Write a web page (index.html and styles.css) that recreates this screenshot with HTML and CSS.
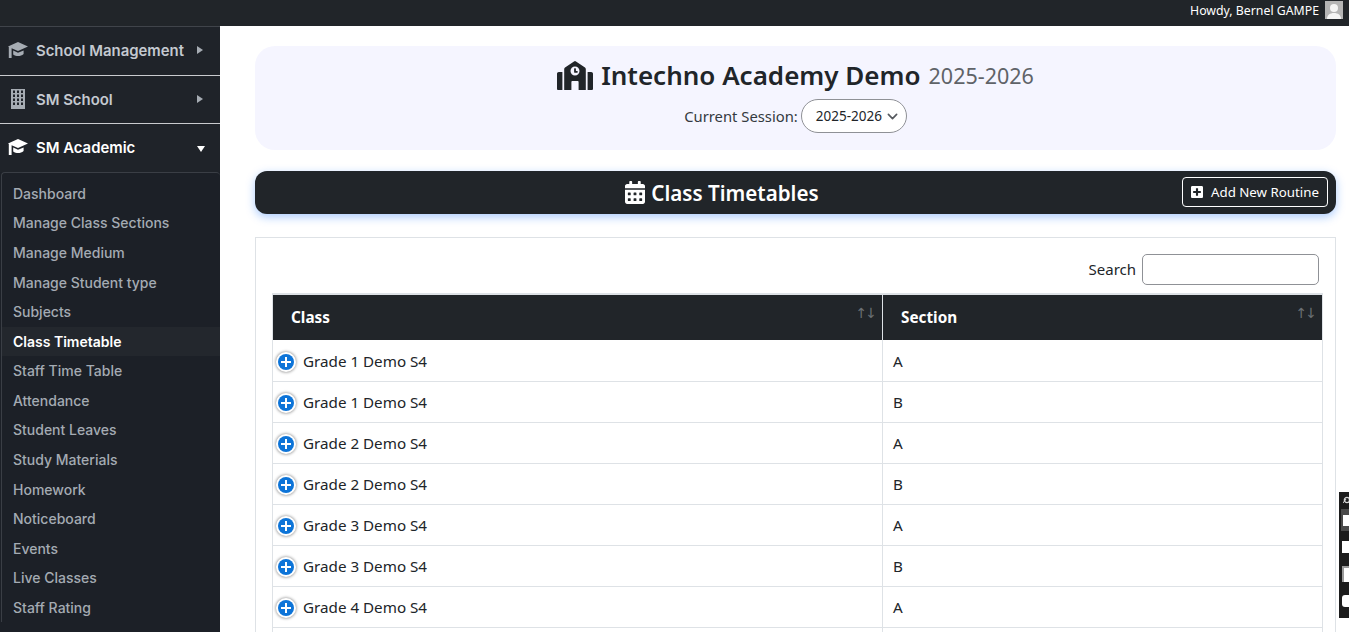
FILE: index.html
```html
<!DOCTYPE html>
<html>
<head>
<meta charset="utf-8">
<title>Class Timetables</title>
<link rel="stylesheet" href="styles.css">
</head>
<body>

<svg class="icon-defs" width="0" height="0">
  <defs>
    <symbol id="i-cap" viewBox="0 0 20 16"><path fill="currentColor" d="M10 0L20 4.5 10 9 3.6 6.2V16H.8V5L0 4.5zM5.2 8.6L10 10.8l5.6-2.4V12c-3 2.6-7.4 2.6-10.4.4z"/></symbol>
    <symbol id="i-building" viewBox="0 0 14 20"><path fill="currentColor" fill-rule="evenodd" d="M0 0h14v20H0zM2 1.5v2.5h2V1.5zm4 0v2.5h2V1.5zm4 0v2.5h2V1.5zM2 5.5V8h2V5.5zm4 0V8h2V5.5zm4 0V8h2V5.5zM2 9.5V12h2V9.5zm4 0V12h2V9.5zm4 0V12h2V9.5zM2 13.500V16h2v-2.500zm4 0V16h2v-2.500zm4 0V16h2v-2.500z"/></symbol>
  </defs>
</svg>

<header class="topbar">
  <span class="howdy">Howdy, Bernel GAMPE</span>
  <span class="avatar">
    <svg viewBox="0 0 18 18" width="18" height="18"><rect width="18" height="18" fill="#b5b5b5"/><circle cx="9" cy="7" r="4" fill="#f4f4f4"/><path d="M2 18c0-4 3-6 7-6s7 2 7 6z" fill="#f4f4f4"/></svg>
  </span>
</header>

<div class="shell">
  <aside class="sidebar">
    <a class="menu-head">
      <svg class="menu-icon"><use href="#i-cap"/></svg>
      <span class="menu-label">School Management</span>
      <span class="caret-right"></span>
    </a>
    <a class="menu-head short">
      <svg class="menu-icon"><use href="#i-building"/></svg>
      <span class="menu-label">SM School</span>
      <span class="caret-right"></span>
    </a>
    <a class="menu-head open">
      <svg class="menu-icon"><use href="#i-cap"/></svg>
      <span class="menu-label">SM Academic</span>
      <span class="caret-down"></span>
    </a>
    <ul class="submenu">
      <li>Dashboard</li>
      <li>Manage Class Sections</li>
      <li>Manage Medium</li>
      <li>Manage Student type</li>
      <li>Subjects</li>
      <li class="active">Class Timetable</li>
      <li>Staff Time Table</li>
      <li>Attendance</li>
      <li>Student Leaves</li>
      <li>Study Materials</li>
      <li>Homework</li>
      <li>Noticeboard</li>
      <li>Events</li>
      <li>Live Classes</li>
      <li>Staff Rating</li>
    </ul>
  </aside>

  <main class="content">
    <section class="hero">
      <h1 class="hero-title">
        <svg class="school-icon" viewBox="0 0 640 512"><path fill="currentColor" d="M0 224v272c0 8.84 7.16 16 16 16h80V192H32c-17.67 0-32 14.33-32 32zm360-48h-24v-40c0-4.42-3.58-8-8-8h-16c-4.42 0-8 3.58-8 8v64c0 4.42 3.58 8 8 8h48c4.42 0 8-3.58 8-8v-16c0-4.42-3.58-8-8-8zm137.75-63.96l-160-106.67a32.02 32.02 0 0 0-35.5 0l-160 106.67A32.002 32.002 0 0 0 128 138.66V512h128V368c0-8.84 7.16-16 16-16h96c8.84 0 16 7.16 16 16v144h128V138.67c0-10.7-5.35-20.7-14.25-26.63zM320 256c-44.18 0-80-35.82-80-80s35.82-80 80-80 80 35.82 80 80-35.82 80-80 80zm288-64h-64v320h80c8.84 0 16-7.16 16-16V224c0-17.67-14.33-32-32-32z"/></svg>
        <span>Intechno Academy Demo</span> <small>2025-2026</small>
      </h1>
      <div class="session">
        <label>Current Session:</label>
        <span class="session-select">2025-2026
          <svg viewBox="0 0 16 16" width="11" height="11"><path d="M2 5l6 6 6-6" fill="none" stroke="#55595e" stroke-width="2.4" stroke-linecap="round" stroke-linejoin="round"/></svg>
        </span>
      </div>
    </section>

    <section class="title-bar">
      <h2 class="title-text">
        <svg class="cal-icon" viewBox="0 0 448 512"><path fill="currentColor" d="M0 464c0 26.5 21.5 48 48 48h352c26.5 0 48-21.5 48-48V192H0v272zm320-196c0-6.6 5.4-12 12-12h40c6.6 0 12 5.4 12 12v40c0 6.6-5.4 12-12 12h-40c-6.6 0-12-5.4-12-12v-40zm0 128c0-6.6 5.4-12 12-12h40c6.6 0 12 5.4 12 12v40c0 6.6-5.4 12-12 12h-40c-6.6 0-12-5.4-12-12v-40zM192 268c0-6.6 5.4-12 12-12h40c6.6 0 12 5.4 12 12v40c0 6.6-5.4 12-12 12h-40c-6.6 0-12-5.4-12-12v-40zm0 128c0-6.6 5.4-12 12-12h40c6.6 0 12 5.4 12 12v40c0 6.6-5.4 12-12 12h-40c-6.6 0-12-5.4-12-12v-40zM64 268c0-6.6 5.4-12 12-12h40c6.6 0 12 5.4 12 12v40c0 6.6-5.4 12-12 12H76c-6.6 0-12-5.4-12-12v-40zm0 128c0-6.6 5.4-12 12-12h40c6.6 0 12 5.4 12 12v40c0 6.6-5.4 12-12 12H76c-6.6 0-12-5.4-12-12v-40zM400 64h-48V16c0-8.8-7.2-16-16-16h-32c-8.8 0-16 7.2-16 16v48H160V16c0-8.8-7.2-16-16-16h-32c-8.8 0-16 7.2-16 16v48H48C21.5 64 0 85.5 0 112v48h448v-48c0-26.5-21.5-48-48-48z"/></svg>
        Class Timetables
      </h2>
      <a class="add-btn">
        <svg class="plus-icon" viewBox="0 0 448 512"><path fill="currentColor" d="M400 32H48C21.5 32 0 53.5 0 80v352c0 26.5 21.5 48 48 48h352c26.5 0 48-21.5 48-48V80c0-26.5-21.5-48-48-48zm-32 252c0 6.6-5.4 12-12 12h-92v92c0 6.6-5.4 12-12 12h-56c-6.6 0-12-5.4-12-12v-92H92c-6.6 0-12-5.4-12-12v-56c0-6.6 5.4-12 12-12h92v-92c0-6.6 5.4-12 12-12h56c6.6 0 12 5.4 12 12v92h92c6.6 0 12 5.4 12 12v56z"/></svg>
        Add New Routine
      </a>
    </section>

    <section class="table-card">
      <div class="search-row">
        <label class="search-label">Search</label>
        <input class="search-input" type="text">
      </div>
      <table class="routine-table">
        <thead>
          <tr>
            <th class="col-class">Class<span class="sort">↑↓</span></th>
            <th class="col-section">Section<span class="sort">↑↓</span></th>
          </tr>
        </thead>
        <tbody>
          <tr><td><span class="expand"></span>Grade 1 Demo S4</td><td>A</td></tr>
          <tr><td><span class="expand"></span>Grade 1 Demo S4</td><td>B</td></tr>
          <tr><td><span class="expand"></span>Grade 2 Demo S4</td><td>A</td></tr>
          <tr><td><span class="expand"></span>Grade 2 Demo S4</td><td>B</td></tr>
          <tr><td><span class="expand"></span>Grade 3 Demo S4</td><td>A</td></tr>
          <tr><td><span class="expand"></span>Grade 3 Demo S4</td><td>B</td></tr>
          <tr><td><span class="expand"></span>Grade 4 Demo S4</td><td>A</td></tr>
          <tr><td></td><td></td></tr>
        </tbody>
      </table>
    </section>
  </main>
</div>

<!-- floating extension toolbar at the window edge -->
<div class="float-tools">
  <svg class="tool-gear" viewBox="0 0 6 8" width="6" height="8"><circle cx="4" cy="4" r="2.6" fill="none" stroke="#d8d8d8" stroke-width="1.4"/><path d="M0 7L3 3" stroke="#d8d8d8" stroke-width="1"/></svg>
  <span class="tool-active"><span class="tool-card"></span></span>
  <span class="tool-block"></span>
  <span class="tool-doc"></span>
  <span class="tool-puzzle"></span>
</div>

</body>
</html>
```

FILE: styles.css
```css
:root {
  --dark: #212529;
  --side: #1c2027;
  --line: #dee2e6;
}

* {
  box-sizing: border-box;
}

html, body {
  height: 100%;
}

body {
  margin: 0;
  background: #fff;
  color: #212529;
  font-family: "Noto Sans", "Open Sans", sans-serif;
  overflow: hidden;
}

.icon-defs {
  display: block;
  height: 0;
}

.topbar {
  height: 26px;
  background: var(--dark);
  color: #fff;
  display: flex;
  justify-content: flex-end;
  align-items: center;
  gap: 6px;
  padding: 0 6px 6px 0;
  font-size: 12.3px;
}

.avatar {
  display: flex;
  width: 18px;
  height: 18px;
}

.shell {
  display: flex;
  height: 606px;
}

/* sidebar */
.sidebar {
  width: 220px;
  flex: none;
  background: var(--side);
  font-family: Inter, sans-serif;
  overflow: hidden;
  border-top: 1px solid #40444a;
}

.menu-head {
  display: flex;
  align-items: center;
  height: 49px;
  padding: 0 14px 0 8px;
  color: #c4c9d0;
  font-size: 14.9px;
  font-weight: 600;
  background: #1f2329;
  border-bottom: 1px solid #c9cbce;
}

.menu-head.short {
  height: 48px;
}

.menu-head.open {
  color: #fff;
  border-bottom: 0;
  height: 48px;
}

.menu-icon {
  width: 20px;
  height: 20px;
  margin: -2px 8px 0 0;
  color: #a6acb3;
}

.menu-head.open .menu-icon {
  color: #fff;
}

.menu-label {
  flex: 1;
}

.caret-right {
  width: 0;
  height: 0;
  border-left: 6px solid #a6acb3;
  border-top: 4.5px solid transparent;
  border-bottom: 4.5px solid transparent;
  margin: 0 3px 2px 0;
}

.caret-down {
  width: 0;
  height: 0;
  border-top: 6px solid #fff;
  border-left: 4.5px solid transparent;
  border-right: 4.5px solid transparent;
  margin-right: 1px;
  margin-top: 2px;
}

.submenu {
  list-style: none;
  margin: 0 0 0 1px;
  padding: 5.9px 0 0;
  border-top: 1px solid #3a3e45;
  border-left: 1px solid #3a3e45;
  border-radius: 4px 4px 0 0;
  font-size: 14px;
  font-weight: 500;
  color: #a4abb3;
}

.submenu li {
  height: 29.57px;
  line-height: 29.57px;
  padding-left: 11px;
  white-space: nowrap;
}

.submenu .active {
  background: #23272d;
  color: #fff;
  font-weight: 600;
}

/* main column */
.content {
  flex: 1;
  min-width: 0;
  padding: 20px 13px 0 35px;
}

.hero {
  height: 104px;
  background: #f5f5ff;
  border-radius: 20px;
  padding-top: 10px;
  text-align: center;
}

.hero-title {
  margin: 0;
  height: 38px;
  font-size: 26px;
  line-height: 38px;
  font-weight: 600;
  display: flex;
  justify-content: center;
  align-items: center;
  gap: 8px;
}

.hero-title small {
  margin-top: 2px;
  font-size: 21.5px;
  font-weight: 400;
  color: #5f6368;
}

.school-icon {
  width: 36px;
  height: 29px;
}

.session {
  display: flex;
  justify-content: center;
  align-items: center;
  gap: 3px;
  margin-top: 5px;
  font-size: 14.8px;
  color: #343a40;
}

.session-select {
  display: flex;
  align-items: center;
  justify-content: space-between;
  width: 106px;
  height: 34px;
  padding: 0 8px 0 14px;
  background: #fff;
  border: 1px solid #8f9196;
  border-radius: 17px;
  font-size: 13.5px;
  color: #212529;
}

.title-bar {
  margin-top: 21px;
  height: 43px;
  background: var(--dark);
  color: #fff;
  border-radius: 12px;
  box-shadow: 0 3px 10px rgba(13, 110, 253, 0.35);
  display: flex;
  align-items: center;
  padding-right: 8px;
}

.title-text {
  flex: 1;
  margin: 0;
  padding-left: 7px;
  font-size: 20.6px;
  font-weight: 600;
  display: flex;
  align-items: center;
  justify-content: center;
  gap: 6px;
}

.cal-icon {
  width: 20px;
  height: 23px;
}

.add-btn {
  display: flex;
  align-items: center;
  gap: 8px;
  height: 30px;
  margin-bottom: 1px;
  padding: 0 8px;
  font-size: 13.3px;
  border: 1px solid #fff;
  border-radius: 4px;
}

.plus-icon {
  width: 12px;
  height: 14px;
}

.table-card {
  margin-top: 23px;
  border: 1px solid var(--line);
  padding: 16px 12px 0 16px;
  height: 500px;
}

.search-row {
  display: flex;
  justify-content: flex-end;
  align-items: center;
  gap: 6px;
  padding-right: 4px;
  font-size: 15px;
}

.search-label {
  margin-bottom: 2px;
}

.search-input {
  width: 177px;
  height: 31px;
  border: 1px solid #8f9196;
  border-radius: 5px;
  background: #fff;
}

.routine-table {
  width: 100%;
  margin-top: 8px;
  border-collapse: separate;
  border-spacing: 0;
  table-layout: fixed;
  border-top: 1px solid var(--line);
  border-left: 1px solid var(--line);
  border-right: 1px solid var(--line);
  font-size: 15.2px;
}

.routine-table th {
  position: relative;
  height: 46px;
  background: var(--dark);
  color: #fff;
  text-align: left;
  font-size: 15.3px;
  font-weight: 700;
  padding: 0 0 2px 18px;
  border-top: 1px solid var(--line);
}

.routine-table th.col-class {
  width: 610px;
  border-right: 1px solid var(--line);
}

.sort {
  position: absolute;
  top: 10px;
  right: 7px;
  font-family: "DejaVu Sans", sans-serif;
  font-size: 14px;
  letter-spacing: -2px;
  font-weight: 400;
  color: #6a6f73;
}

.routine-table td {
  height: 41px;
  padding: 0 0 0 10px;
  border-bottom: 1px solid var(--line);
}

.routine-table tbody tr:first-child td {
  height: 42px;
}

.routine-table td:first-child {
  padding-left: 4px;
  border-right: 1px solid var(--line);
}

.expand {
  display: inline-block;
  position: relative;
  vertical-align: -3px;
  width: 16px;
  height: 16px;
  margin: 0 9px 0 1px;
  border-radius: 50%;
  background: #0d74d8;
  box-shadow: 0 0 0 2px #fff, 0 0 3px 2.5px #9a9a9a;
}

.expand::before,
.expand::after {
  content: "";
  position: absolute;
  background: #fff;
}

.expand::before {
  left: 3px;
  right: 3px;
  top: 7px;
  height: 2px;
}

.expand::after {
  top: 3px;
  bottom: 3px;
  left: 7px;
  width: 2px;
}

/* extension toolbar, sits over the page */
.float-tools {
  position: fixed;
  top: 492px;
  right: 0;
  width: 10px;
  height: 126px;
  background: #1c1c1c;
  display: flex;
  flex-direction: column;
  align-items: flex-end;
}

.tool-gear {
  margin-top: 4px;
}

.tool-active {
  display: flex;
  align-items: center;
  justify-content: flex-end;
  width: 8px;
  height: 22px;
  margin-top: 5px;
  background: #4a4a4a;
}

.tool-card {
  width: 6px;
  height: 11px;
  background: #fff;
}

.tool-block {
  width: 7px;
  height: 12px;
  margin-top: 10px;
  background: #fff;
}

.tool-doc {
  width: 7px;
  height: 16px;
  margin-top: 13px;
  background: #fff;
  border-left: 2px solid #9a9a9a;
  border-top: 2px solid #9a9a9a;
}

.tool-puzzle {
  width: 7px;
  height: 12px;
  margin-top: 13px;
  background: #fff;
  border-radius: 3px 0 0 3px;
}
```
